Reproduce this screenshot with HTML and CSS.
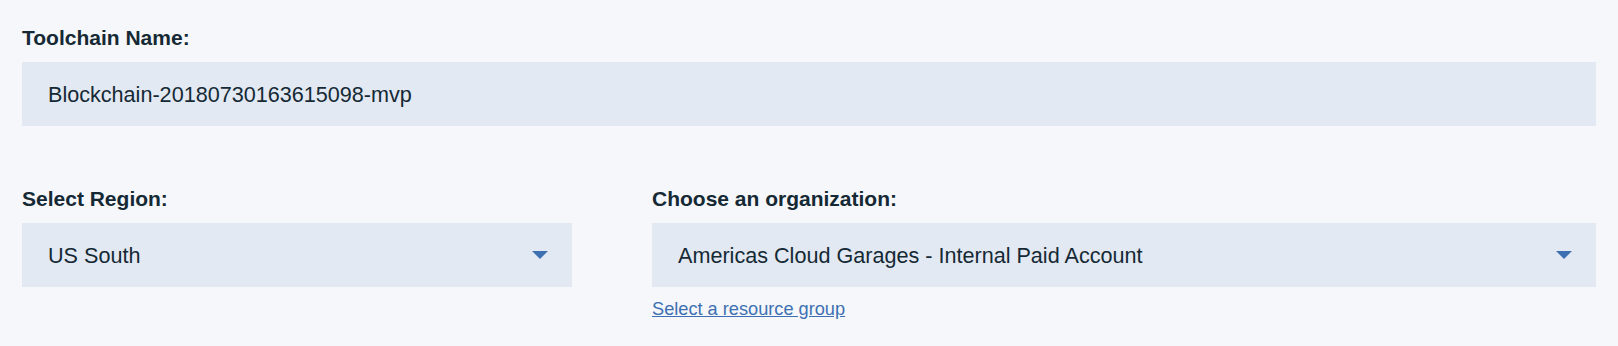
FILE: index.html
```html
<!DOCTYPE html>
<html lang="en">
<head>
<meta charset="utf-8">
<title>Toolchain</title>
<link rel="stylesheet" href="styles.css">
</head>
<body>
<form class="form">
  <div class="field">
    <label class="label" for="tc-name">Toolchain Name:</label>
    <div class="input">
      <span class="value">Blockchain-20180730163615098-mvp</span>
    </div>
  </div>
  <div class="row">
    <div class="field region">
      <label class="label">Select Region:</label>
      <div class="input select">
        <span class="value">US South</span>
        <svg class="caret" width="16" height="8" viewBox="0 0 16 8" aria-hidden="true"><polygon points="0,0 16,0 8,8" fill="#3d70b2"/></svg>
      </div>
    </div>
    <div class="field org">
      <label class="label">Choose an organization:</label>
      <div class="input select">
        <span class="value">Americas Cloud Garages - Internal Paid Account</span>
        <svg class="caret" width="16" height="8" viewBox="0 0 16 8" aria-hidden="true"><polygon points="0,0 16,0 8,8" fill="#3d70b2"/></svg>
      </div>
      <a class="link" href="#">Select a resource group</a>
    </div>
  </div>
</form>
</body>
</html>
```
FILE: styles.css
```css
html, body {
  margin: 0;
  padding: 0;
  background: #f5f7fa;
}
body {
  font-family: "Liberation Sans", Arial, Helvetica, sans-serif;
  color: #152935;
}
.form {
  padding: 26px 22px 0 22px;
  display: flex;
  flex-direction: column;
}
.field {
  display: flex;
  flex-direction: column;
}
.label {
  font-size: 21px;
  line-height: 24px;
  font-weight: bold;
  margin-bottom: 12px;
}
.input {
  height: 64px;
  box-sizing: border-box;
  background: #e2e9f2;
  display: flex;
  align-items: center;
  padding: 2px 24px 0 26px;
}
.value {
  font-size: 21.6px;
  line-height: 26px;
  flex: 1;
}
.caret {
  display: block;
  flex: none;
  margin-top: -2px;
}
.row {
  display: flex;
  gap: 80px;
  margin-top: 61px;
}
.region {
  width: 550px;
  flex: none;
}
.org {
  flex: 1;
  align-items: flex-start;
}
.org .input {
  align-self: stretch;
}
.link {
  margin-top: 11px;
  font-size: 18.2px;
  line-height: 22px;
  color: #3d70b2;
  text-decoration: underline;
}
```
